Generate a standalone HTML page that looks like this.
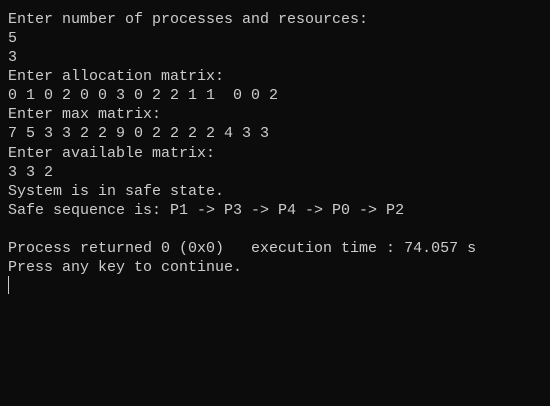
<!DOCTYPE html>
<html><head><style>
html,body{margin:0;padding:0;width:550px;height:406px;background:#0c0c0c;overflow:hidden}
pre{margin:0;position:absolute;left:8px;top:10px;font-family:"Liberation Mono",monospace;font-size:15px;line-height:19.08px;color:#cccccc}
.cur{position:absolute;left:8px;top:276px;width:1px;height:18px;background:#cccccc}
</style></head><body>
<pre>Enter number of processes and resources:
5
3
Enter allocation matrix:
0 1 0 2 0 0 3 0 2 2 1 1  0 0 2
Enter max matrix:
7 5 3 3 2 2 9 0 2 2 2 2 4 3 3
Enter available matrix:
3 3 2
System is in safe state.
Safe sequence is: P1 -&gt; P3 -&gt; P4 -&gt; P0 -&gt; P2

Process returned 0 (0x0)   execution time : 74.057 s
Press any key to continue.</pre>
<div class="cur"></div>
</body></html>
